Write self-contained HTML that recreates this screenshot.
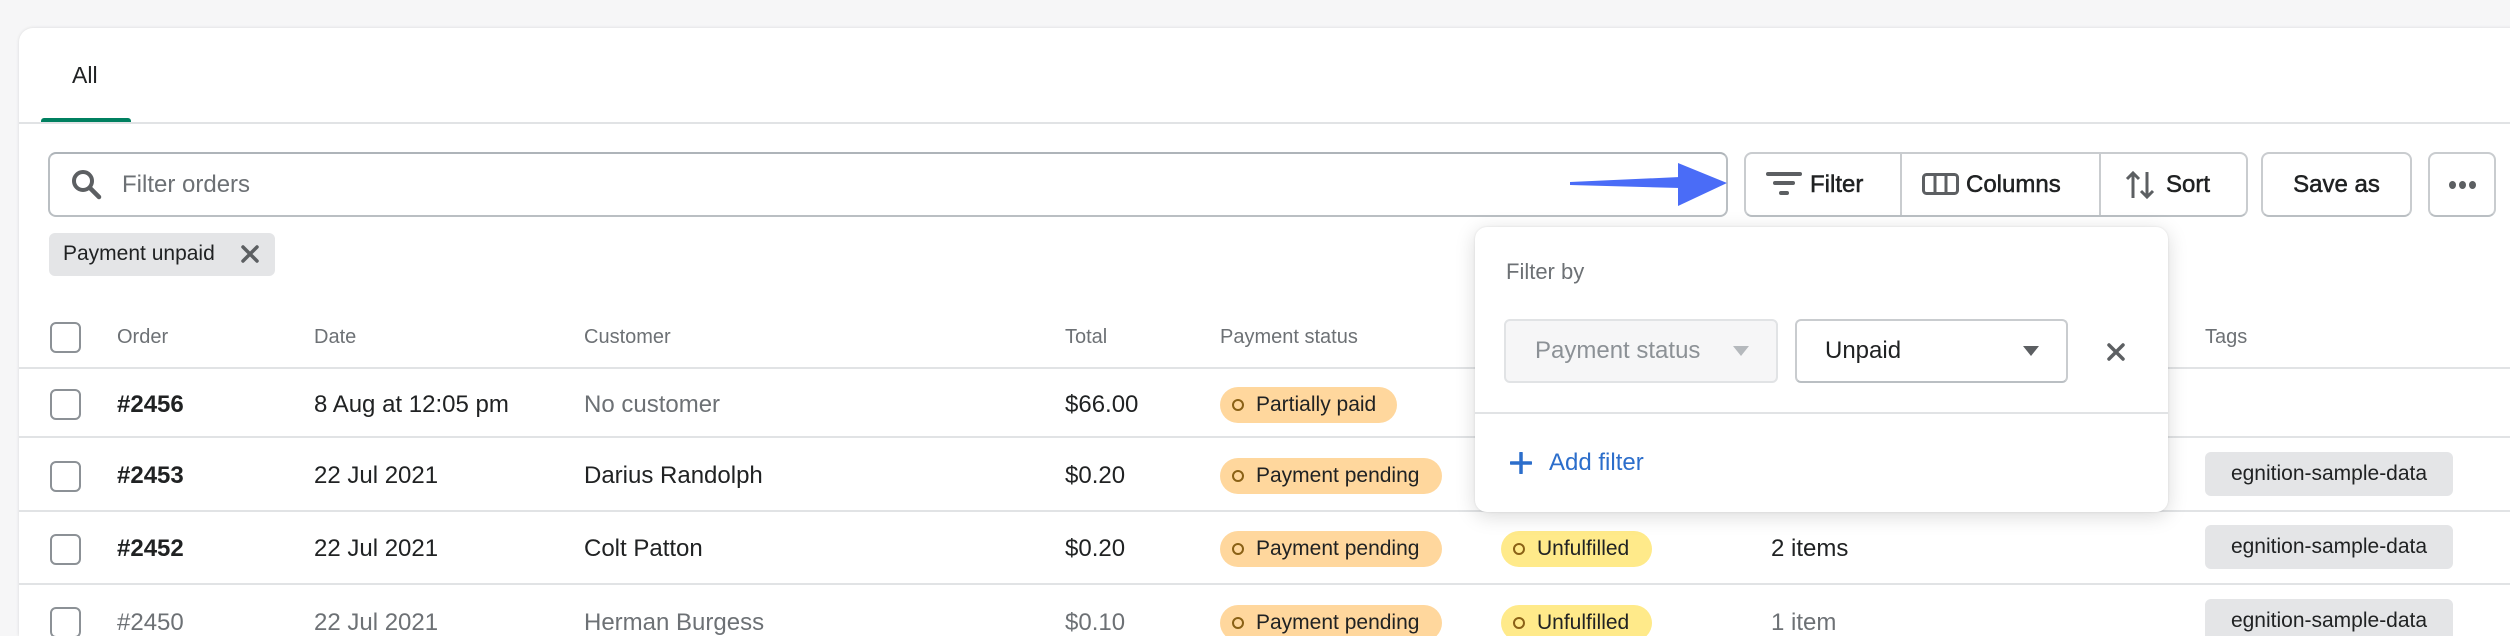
<!DOCTYPE html>
<html style="width:2510px;height:636px;overflow:hidden"><head><meta charset="utf-8"><style>
*{margin:0;padding:0;box-sizing:border-box}
body{width:2510px;height:636px;background:#f6f6f7;font-family:"Liberation Sans",sans-serif;color:#202223;position:relative;overflow:hidden}
.a{position:absolute;white-space:nowrap}
.card{position:absolute;left:19px;top:28px;width:2500px;height:608px;background:#fff;border-radius:14px 0 0 0;box-shadow:0 0 3px rgba(0,0,0,.12)}
.t{font-size:24px;line-height:28px}
.h{font-size:20px;color:#6d7175}
.cb{position:absolute;left:50px;width:31px;height:31px;border:2.5px solid #8c9196;border-radius:6px;background:#fff}
.line{position:absolute;left:19px;width:2491px;height:2px;background:#e1e3e5}
.badge{position:absolute;height:36px;border-radius:18px;font-size:21px;line-height:36px;padding-left:36px;color:#202223}
.badge:before{content:"";position:absolute;left:12px;top:12px;width:12px;height:12px;border:2.5px solid #8a6116;border-radius:50%;box-sizing:border-box}
.pp{background:#ffd79d}
.uf{background:#ffea8a}
.tag{position:absolute;left:2205px;width:248px;height:44px;background:#e4e5e7;border-radius:6px;font-size:21px;line-height:44px;text-align:center;color:#202223}
.btn{position:absolute;top:152px;height:65px;border:2px solid #c9cccf;border-bottom-color:#babfc3;border-radius:8px;background:#fff;font-size:24px;color:#202223}
</style></head><body>
<div class="card"></div>
<div class="a t" style="left:72px;top:61px;font-size:23px">All</div>
<div class="a" style="left:41px;top:118px;width:90px;height:5px;background:#008060;border-radius:3px 3px 0 0"></div>
<div class="a" style="left:19px;top:122px;width:2491px;height:2px;background:#e1e3e5"></div>

<div class="a" style="left:48px;top:152px;width:1680px;height:65px;border:2px solid #babfc3;border-top-color:#aeb4b9;border-radius:8px"></div>
<svg class="a" style="left:70px;top:168px" width="34" height="34" viewBox="0 0 34 34"><circle cx="13" cy="13" r="9" fill="none" stroke="#5c5f62" stroke-width="4"/><path d="M20 20 L29 29" stroke="#5c5f62" stroke-width="4.5" stroke-linecap="round"/></svg>
<div class="a t" style="left:122px;top:171px;color:#6d7175">Filter orders</div>

<svg class="a" style="left:1565px;top:160px" width="165" height="50" viewBox="0 0 165 50"><path d="M5 22 L115 17 L115 28 L5 25 Z" fill="#4a6cf7"/><path d="M113 3 L162 23 L113 46 Z" fill="#4a6cf7"/></svg>

<div class="btn" style="left:1744px;width:504px"></div>
<div class="a" style="left:1900px;top:154px;width:2px;height:61px;background:#c9cccf"></div>
<div class="a" style="left:2099px;top:154px;width:2px;height:61px;background:#c9cccf"></div>
<svg class="a" style="left:1766px;top:172px" width="36" height="24" viewBox="0 0 36 24"><rect x="0" y="0" width="36" height="4" rx="2" fill="#5c5f62"/><rect x="7" y="9" width="22" height="4" rx="2" fill="#5c5f62"/><rect x="13" y="19" width="10" height="4" rx="2" fill="#5c5f62"/></svg>
<div class="a t" style="left:1810px;top:171px;-webkit-text-stroke:0.5px #202223">Filter</div>
<svg class="a" style="left:1922px;top:173px" width="37" height="22" viewBox="0 0 37 22"><rect x="1.5" y="1.5" width="34" height="19" rx="3" fill="none" stroke="#5c5f62" stroke-width="3"/><path d="M13 2 V20 M24 2 V20" stroke="#5c5f62" stroke-width="3"/></svg>
<div class="a t" style="left:1966px;top:171px;-webkit-text-stroke:0.5px #202223">Columns</div>
<svg class="a" style="left:2124px;top:170px" width="32" height="30" viewBox="0 0 32 30"><path d="M9 28 V3 M3 9 L9 3 L15 9" stroke="#5c5f62" stroke-width="3" fill="none"/><path d="M23 2 V27 M17 21 L23 27 L29 21" stroke="#5c5f62" stroke-width="3" fill="none"/></svg>
<div class="a t" style="left:2166px;top:171px;-webkit-text-stroke:0.5px #202223">Sort</div>
<div class="btn" style="left:2261px;width:151px;text-align:center;line-height:61px;-webkit-text-stroke:0.5px #202223">Save as</div>
<div class="btn" style="left:2428px;width:68px"></div>
<div class="a" style="left:2449px;top:181px;font-size:0"><span style="display:inline-block;width:7px;height:8px;border-radius:50%;background:#5c5f62;margin-right:3px"></span><span style="display:inline-block;width:7px;height:8px;border-radius:50%;background:#5c5f62;margin-right:3px"></span><span style="display:inline-block;width:7px;height:8px;border-radius:50%;background:#5c5f62"></span></div>

<div class="a" style="left:49px;top:233px;width:226px;height:43px;background:#e4e5e7;border-radius:6px"></div>
<div class="a" style="left:63px;top:242px;font-size:21px;line-height:24px">Payment unpaid</div>
<svg class="a" style="left:241px;top:245px" width="18" height="18" viewBox="0 0 18 18"><path d="M2 2 L16 16 M16 2 L2 16" stroke="#5c5f62" stroke-width="3.5" stroke-linecap="round"/></svg>

<div class="cb" style="top:322px"></div>
<div class="a h" style="left:117px;top:326px">Order</div>
<div class="a h" style="left:314px;top:326px">Date</div>
<div class="a h" style="left:584px;top:326px">Customer</div>
<div class="a h" style="left:1065px;top:326px">Total</div>
<div class="a h" style="left:1220px;top:326px">Payment status</div>
<div class="a h" style="left:2205px;top:326px">Tags</div>
<div class="line" style="top:367px"></div>

<div class="cb" style="top:389px"></div>
<div class="a t" style="left:117px;top:391px;font-weight:bold">#2456</div>
<div class="a t" style="left:314px;top:391px">8 Aug at 12:05 pm</div>
<div class="a t" style="left:584px;top:391px;color:#6d7175">No customer</div>
<div class="a t" style="left:1065px;top:391px">$66.00</div>
<div class="badge pp" style="left:1220px;top:387px;width:177px">Partially paid</div>
<div class="line" style="top:436px"></div>

<div class="cb" style="top:461px"></div>
<div class="a t" style="left:117px;top:462px;font-weight:bold">#2453</div>
<div class="a t" style="left:314px;top:462px">22 Jul 2021</div>
<div class="a t" style="left:584px;top:462px">Darius Randolph</div>
<div class="a t" style="left:1065px;top:462px">$0.20</div>
<div class="badge pp" style="left:1220px;top:458px;width:222px">Payment pending</div>
<div class="tag" style="top:452px">egnition-sample-data</div>
<div class="line" style="top:510px"></div>

<div class="cb" style="top:534px"></div>
<div class="a t" style="left:117px;top:535px;font-weight:bold">#2452</div>
<div class="a t" style="left:314px;top:535px">22 Jul 2021</div>
<div class="a t" style="left:584px;top:535px">Colt Patton</div>
<div class="a t" style="left:1065px;top:535px">$0.20</div>
<div class="badge pp" style="left:1220px;top:531px;width:222px">Payment pending</div>
<div class="badge uf" style="left:1501px;top:531px;width:151px">Unfulfilled</div>
<div class="a t" style="left:1771px;top:535px">2 items</div>
<div class="tag" style="top:525px">egnition-sample-data</div>
<div class="line" style="top:583px"></div>

<div class="cb" style="top:607px"></div>
<div class="a t" style="left:117px;top:609px;color:#6d7175">#2450</div>
<div class="a t" style="left:314px;top:609px;color:#6d7175">22 Jul 2021</div>
<div class="a t" style="left:584px;top:609px;color:#6d7175">Herman Burgess</div>
<div class="a t" style="left:1065px;top:609px;color:#6d7175">$0.10</div>
<div class="badge pp" style="left:1220px;top:605px;width:222px">Payment pending</div>
<div class="badge uf" style="left:1501px;top:605px;width:151px">Unfulfilled</div>
<div class="a t" style="left:1771px;top:609px;color:#6d7175">1 item</div>
<div class="tag" style="top:599px">egnition-sample-data</div>

<div class="a" style="left:1475px;top:227px;width:693px;height:285px;background:#fff;border-radius:12px;box-shadow:0 4px 20px rgba(0,0,0,.15),0 0 2px rgba(0,0,0,.1)"></div>
<div class="a" style="left:1506px;top:259px;font-size:22px;color:#6d7175">Filter by</div>
<div class="a" style="left:1504px;top:319px;width:274px;height:64px;background:#f6f6f7;border:2px solid #e1e3e5;border-radius:6px"></div>
<div class="a t" style="left:1535px;top:337px;color:#8c9196">Payment status</div>
<svg class="a" style="left:1733px;top:346px" width="16" height="10"><path d="M0 0 H16 L8 10 Z" fill="#b5b9bd"/></svg>
<div class="a" style="left:1795px;top:319px;width:273px;height:64px;background:#fff;border:2px solid #c9cccf;border-bottom-color:#babfc3;border-radius:6px"></div>
<div class="a t" style="left:1825px;top:337px">Unpaid</div>
<svg class="a" style="left:2023px;top:346px" width="16" height="10"><path d="M0 0 H16 L8 10 Z" fill="#5c5f62"/></svg>
<svg class="a" style="left:2107px;top:343px" width="18" height="18" viewBox="0 0 18 18"><path d="M2 2 L16 16 M16 2 L2 16" stroke="#5c5f62" stroke-width="3.5" stroke-linecap="round"/></svg>
<div class="a" style="left:1475px;top:412px;width:693px;height:2px;background:#e1e3e5"></div>
<svg class="a" style="left:1510px;top:452px" width="22" height="22" viewBox="0 0 22 22"><path d="M11 1 V21 M1 11 H21" stroke="#2c6ecb" stroke-width="3.5" stroke-linecap="round"/></svg>
<div class="a t" style="left:1549px;top:449px;color:#2c6ecb">Add filter</div>
</body></html>
